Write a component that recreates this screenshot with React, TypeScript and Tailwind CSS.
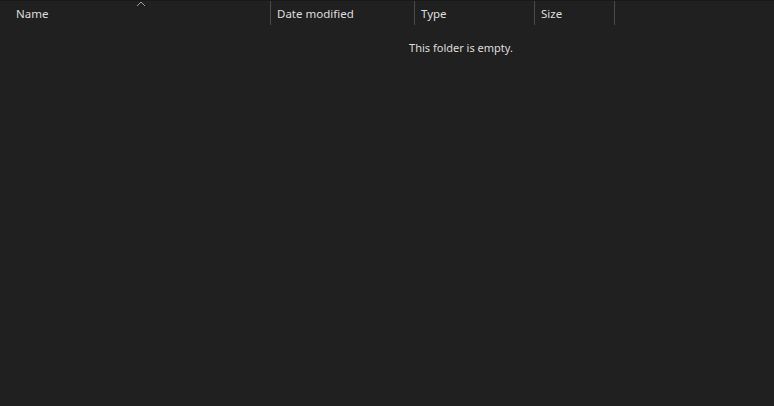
export default function App() {
  const cols = [
    { label: 'Name', w: 'w-[271px]', pl: 'pl-[16px]' },
    { label: 'Date modified', w: 'w-[144px]', pl: 'pl-[6px]' },
    { label: 'Type', w: 'w-[120px]', pl: 'pl-[6px]' },
    { label: 'Size', w: 'w-[80px]', pl: 'pl-[6px]' },
  ]
  return (
    <div className="w-[774px] h-[406px] bg-[#202020] text-[#dedede] overflow-hidden" style={{ fontFamily: '"Noto Sans", "Open Sans", sans-serif' }}>
      <div className="h-px bg-[#191919]" />
      <div className="relative flex h-[25px] text-[11.5px]">
        <svg className="absolute left-[136px] top-0" width="10" height="6" viewBox="0 0 10 6">
          <path d="M1 5 L5 1 L9 5" fill="none" stroke="#a0a0a0" strokeWidth="1" />
        </svg>
        {cols.map((c) => (
          <div key={c.label} className={`${c.w} ${c.pl} flex items-center pt-[2px] border-r border-[#4a4a4a] h-[24px]`}>
            {c.label}
          </div>
        ))}
      </div>
      <div className="flex justify-center pl-[148px] mt-[14px] text-[11px]">This folder is empty.</div>
    </div>
  )
}
